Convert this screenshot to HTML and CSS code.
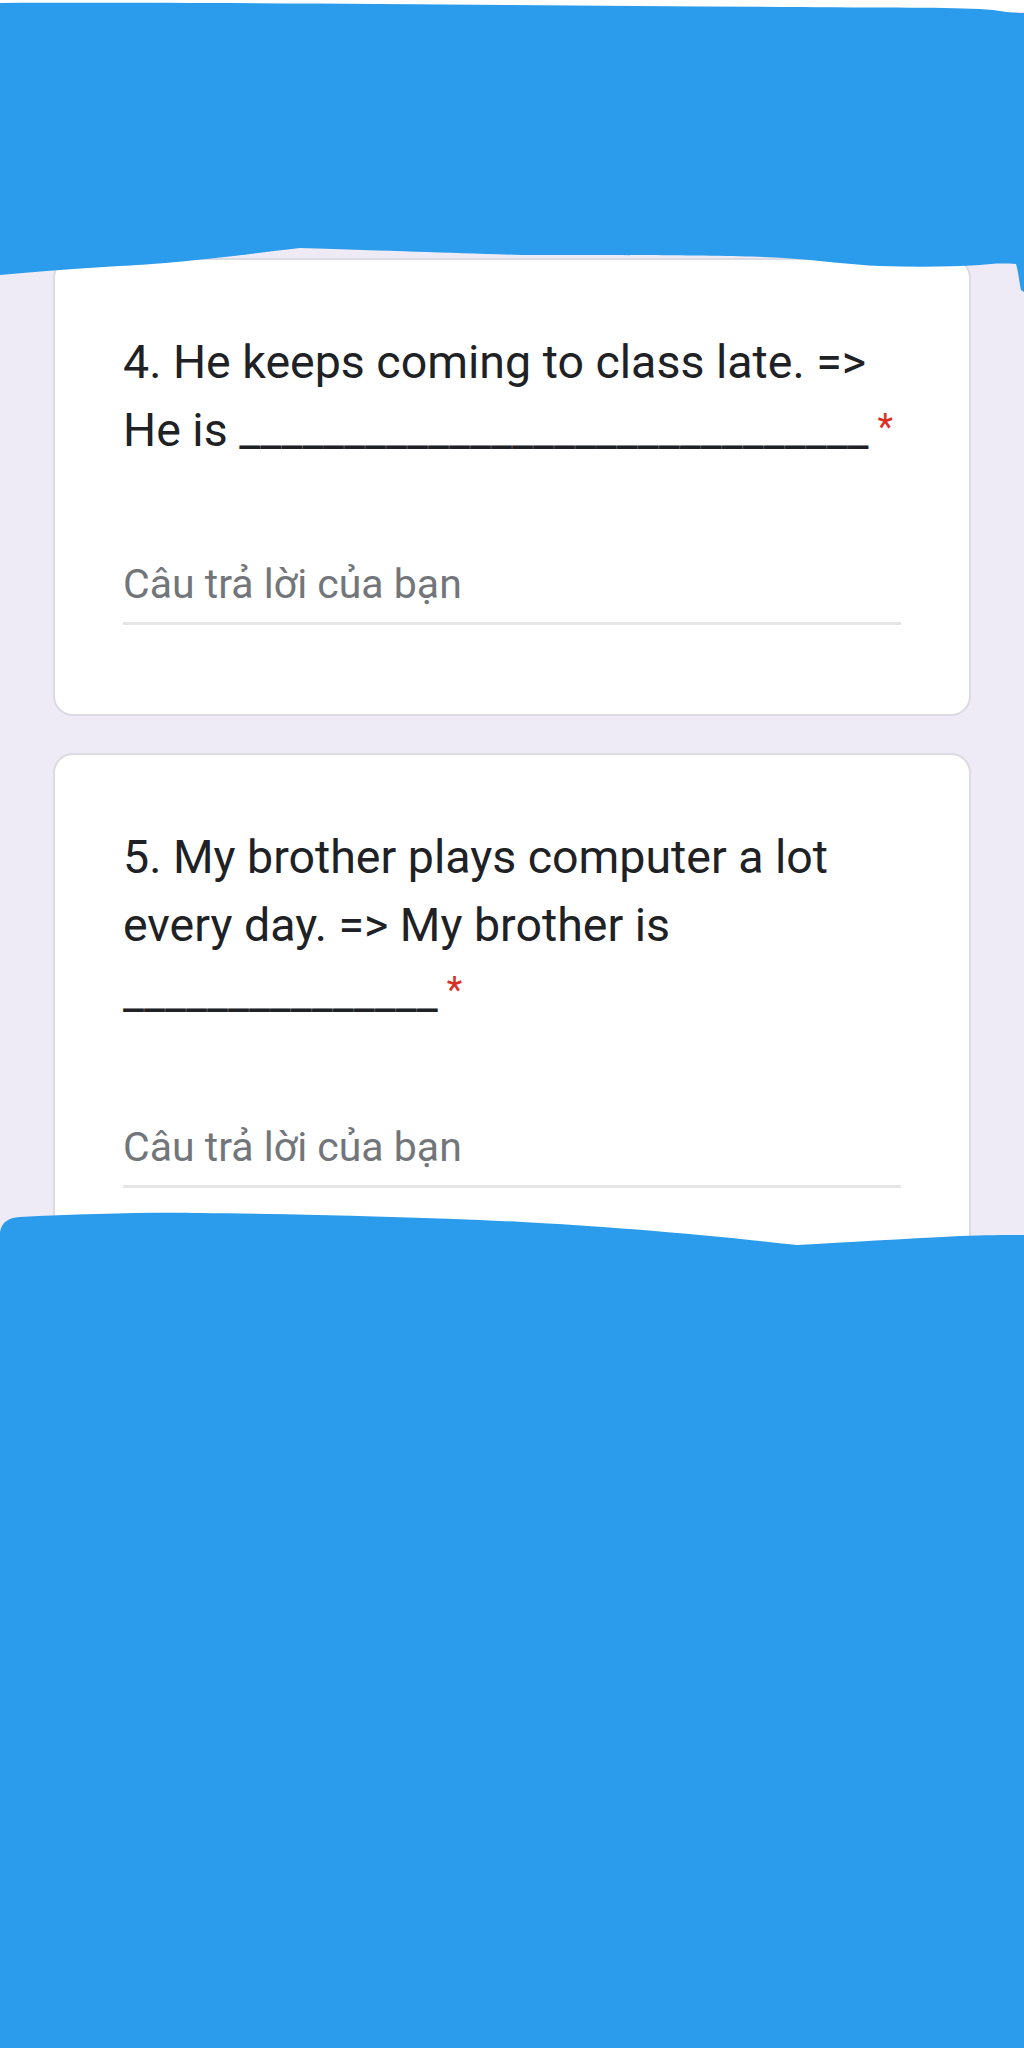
FILE: index.html
```html
<!DOCTYPE html>
<html lang="vi">
<head>
<meta charset="utf-8">
<title>Biểu mẫu</title>
<link rel="stylesheet" href="styles.css">
</head>
<body>
<div class="statusbar"></div>
<main class="form">
  <section class="card">
    <div class="title">4. He keeps coming to class late. =&gt;<br>He is ______________________________<span class="req"> *</span></div>
    <div class="answer"><div class="placeholder">Câu trả lời của bạn</div></div>
  </section>
  <section class="card">
    <div class="title">5. My brother plays computer a lot<br>every day. =&gt; My brother is<br>_______________<span class="req"> *</span></div>
    <div class="answer"><div class="placeholder">Câu trả lời của bạn</div></div>
  </section>
  <section class="card">
    <div class="title">6.</div>
    <div class="answer"><div class="placeholder">Câu trả lời của bạn</div></div>
  </section>
</main>
<svg class="scribble" width="1024" height="2048" viewBox="0 0 1024 2048" aria-hidden="true">
  <path d="M0 3 C 200 2, 500 5, 800 7 C 900 8, 960 7, 993 10 C 1005 12, 1015 13, 1024 13 L 1024 292 L 1021 290 C 1019 280, 1018 270, 1016 264 C 1000 263, 990 264, 980 265 C 950 267, 914 267, 880 266 C 850 265, 820 260, 784 258 C 740 255, 600 255, 522 255 C 450 253, 400 251, 300 248 C 270 251, 230 257, 196 260 C 160 264, 120 266, 104 267 C 60 270, 30 272, 0 275 Z"/>
  <path d="M0 1232 C 2 1222, 8 1218, 20 1217 C 80 1214, 150 1212, 200 1213 C 300 1214, 420 1217, 522 1222 C 600 1226, 700 1234, 797 1245 C 850 1242, 900 1239, 960 1236 C 990 1235, 1010 1235, 1024 1235 L 1024 2048 L 0 2048 Z"/>
</svg>
</body>
</html>
```

FILE: styles.css
```css
html, body {
  margin: 0;
  padding: 0;
}

body {
  background: #eeeaf6;
  width: 1024px;
  min-height: 2048px;
  position: relative;
  overflow: hidden;
  font-family: Roboto, "Liberation Sans", Arial, sans-serif;
}

.statusbar {
  height: 12px;
  background: #ffffff;
}

.form {
  padding: 246px 53px 0 53px;
  display: flex;
  flex-direction: column;
  gap: 37px;
}

.card {
  background: #ffffff;
  border: 2px solid #dcdbe2;
  border-radius: 20px;
  padding: 68px 68px 89px 68px;
}

.title {
  font-size: 46.5px;
  line-height: 68px;
  color: #202124;
  white-space: nowrap;
}

.req {
  color: #d93025;
  font-size: 36px;
  line-height: 0;
  vertical-align: 7px;
}

.answer {
  margin-top: 92px;
  border-bottom: 3px solid #e6e6e8;
  padding-bottom: 10px;
}

.placeholder {
  font-size: 41px;
  line-height: 56px;
  color: #72767a;
}

.scribble {
  position: absolute;
  top: 0;
  left: 0;
  fill: #2b9beb;
  pointer-events: none;
}
```
